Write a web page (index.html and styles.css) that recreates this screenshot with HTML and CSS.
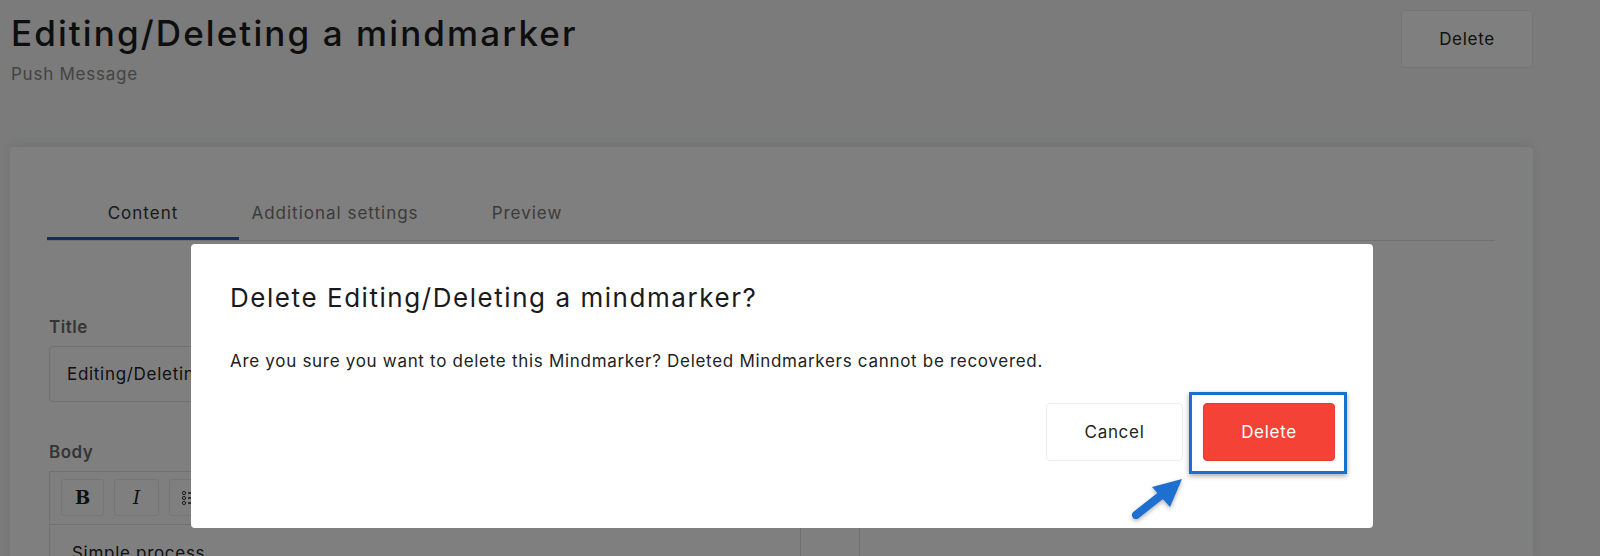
FILE: index.html
```html
<!DOCTYPE html>
<html lang="en">
<head>
  <meta charset="UTF-8" />
  <meta name="viewport" content="width=device-width, initial-scale=1.0" />
  <title>Editing/Deleting a mindmarker</title>
  <link rel="stylesheet" href="styles.css">
</head>
<body>
  <div class="page">
    <header class="page-head">
      <div>
        <h1 class="page-title">Editing/Deleting a mindmarker</h1>
        <p class="page-sub">Push Message</p>
      </div>
      <button class="btn btn-plain">Delete</button>
    </header>

    <section class="card">
      <nav class="tabs">
        <div class="tab active">Content</div>
        <div class="tab">Additional settings</div>
        <div class="tab">Preview</div>
      </nav>

      <div class="card-body">
        <div class="form-col">
          <label class="field-label">Title</label>
          <div class="input">Editing/Deleting a mindmarker</div>

          <label class="field-label body-label">Body</label>
          <div class="editor">
            <div class="toolbar">
              <span class="tool tool-b">B</span>
              <span class="tool tool-i">I</span>
              <span class="tool">
                <svg width="18" height="16" viewBox="0 0 18 16">
                  <circle cx="2" cy="3" r="1.6" fill="none" stroke="#333" stroke-width="1"/>
                  <circle cx="2" cy="8" r="1.6" fill="none" stroke="#333" stroke-width="1"/>
                  <circle cx="2" cy="13" r="1.6" fill="none" stroke="#333" stroke-width="1"/>
                  <path d="M6 3h11M6 8h11M6 13h11" stroke="#333" stroke-width="1.4"/>
                </svg>
              </span>
            </div>
            <div class="editor-text">Simple process</div>
          </div>
        </div>
        <div class="side-col"></div>
      </div>
    </section>
  </div>

  <div class="overlay"></div>

  <div class="modal">
    <h2 class="modal-title">Delete Editing/Deleting a mindmarker?</h2>
    <p class="modal-text">Are you sure you want to delete this Mindmarker? Deleted Mindmarkers cannot be recovered.</p>
    <div class="modal-actions">
      <button class="btn btn-plain">Cancel</button>
      <span class="highlight">
        <button class="btn btn-danger">Delete</button>
        <svg class="pointer" width="60" height="48" viewBox="0 0 60 48">
          <path d="M6 42 L34 20" stroke="#1f6fd0" stroke-width="8" stroke-linecap="round"/>
          <path d="M52 6 L22 14 L40 34 Z" fill="#1f6fd0"/>
        </svg>
      </span>
    </div>
  </div>
</body>
</html>
```

FILE: styles.css
```css
body {
  margin: 0;
  background: #f4f6f5;
  color: #222;
  font-family: Inter, "Open Sans", Arial, sans-serif;
  height: 556px;
  overflow: hidden;
}

.page {
  padding: 0 67px 0 10px;
}

.page-head {
  display: flex;
  justify-content: space-between;
  align-items: flex-start;
  padding-top: 10px;
  height: 136px;
  box-sizing: border-box;
}

.page-title {
  margin: 0 0 0 1px;
  font-size: 35px;
  font-weight: 500;
  letter-spacing: 2.1px;
  line-height: 46px;
  color: #1c1c1c;
}

.page-sub {
  margin: 8px 0 0 1px;
  font-size: 17px;
  letter-spacing: 0.75px;
  color: #888;
}

.btn {
  font-family: inherit;
  font-size: 17px;
  letter-spacing: 0.7px;
  height: 58px;
  border-radius: 4px;
  cursor: pointer;
}

.btn-plain {
  background: #fff;
  border: 1px solid #ebebeb;
  color: #222;
  width: 132px;
}

.btn-danger {
  background: #f44336;
  border: 1px solid #e53a2d;
  color: #fff;
  width: 132px;
}

.card {
  background: #fff;
  border-radius: 4px;
  box-shadow: 0 -2px 8px rgba(0, 0, 0, 0.08);
  margin-top: 11px;
  padding: 38px 38px 0 37px;
  height: 420px;
  box-sizing: border-box;
}

.tabs {
  display: flex;
  border-bottom: 1px solid #e3e3e3;
  height: 56px;
  box-sizing: border-box;
}

.tab {
  width: 192px;
  display: flex;
  align-items: center;
  justify-content: center;
  font-size: 17px;
  letter-spacing: 1px;
  color: #777;
  box-sizing: border-box;
}

.tab.active {
  color: #333;
  border-bottom: 3px solid #2a5fae;
  padding-top: 3px;
}

.card-body {
  display: flex;
  padding: 76px 0 0 2px;
}

.form-col {
  width: 752px;
  display: flex;
  flex-direction: column;
}

.field-label {
  font-size: 17px;
  font-weight: 600;
  letter-spacing: 0.5px;
  color: #6b6b6b;
  line-height: 20px;
  margin-bottom: 9px;
}

.body-label {
  margin-top: 40px;
  margin-bottom: 9px;
}

.input {
  height: 56px;
  border: 1px solid #e2e2e2;
  border-radius: 4px;
  box-sizing: border-box;
  padding: 0 17px;
  display: flex;
  align-items: center;
  font-size: 17px;
  letter-spacing: 0.7px;
  color: #222;
}

.editor {
  border: 1px solid #e2e2e2;
  border-bottom: none;
  height: 200px;
}

.toolbar {
  display: flex;
  gap: 10px;
  padding: 7px 11px 8px;
  border-bottom: 1px solid #e2e2e2;
}

.tool {
  width: 43px;
  height: 37px;
  border: 1px solid #ececec;
  border-radius: 3px;
  display: flex;
  align-items: center;
  justify-content: center;
  color: #222;
  box-sizing: border-box;
}

.tool-b {
  font-family: "DejaVu Serif", serif;
  font-weight: bold;
  font-size: 18px;
}

.tool-i {
  width: 45px;
  font-family: "DejaVu Serif", serif;
  font-style: italic;
  font-size: 18px;
}

.editor-text {
  padding: 18px 22px;
  font-size: 17px;
  letter-spacing: 0.7px;
}

.side-col {
  margin-left: 58px;
  border-left: 1px solid #e2e2e2;
  height: 300px;
  width: 600px;
}

.overlay {
  position: fixed;
  inset: 0;
  background: rgba(0, 0, 0, 0.5);
}

.modal {
  position: fixed;
  left: 191px;
  top: 244px;
  width: 1182px;
  height: 284px;
  background: #fff;
  border-radius: 4px;
  box-sizing: border-box;
  padding: 38px 38px 0 39px;
}

.modal-title {
  margin: 0;
  font-size: 26px;
  font-weight: 400;
  letter-spacing: 1.55px;
  line-height: 32px;
  color: #1a1a1a;
}

.modal-text {
  margin: 37px 0 0;
  font-size: 17px;
  letter-spacing: 0.7px;
  line-height: 20px;
  color: #222;
}

.modal-actions {
  display: flex;
  justify-content: flex-end;
  gap: 20px;
  margin-top: 32px;
}

.modal-actions .btn-plain {
  width: 137px;
  border-color: #eee;
}

.highlight {
  position: relative;
  display: block;
}

.highlight::after {
  content: "";
  position: absolute;
  top: -11px;
  left: -14px;
  right: -12px;
  bottom: -13px;
  border: 3px solid #1b6fd1;
  box-shadow: 0 2px 5px rgba(0, 0, 0, 0.35);
  pointer-events: none;
}

.pointer {
  position: absolute;
  left: -73px;
  top: 70px;
  filter: drop-shadow(0 2px 2px rgba(0, 0, 0, 0.3));
}
```
